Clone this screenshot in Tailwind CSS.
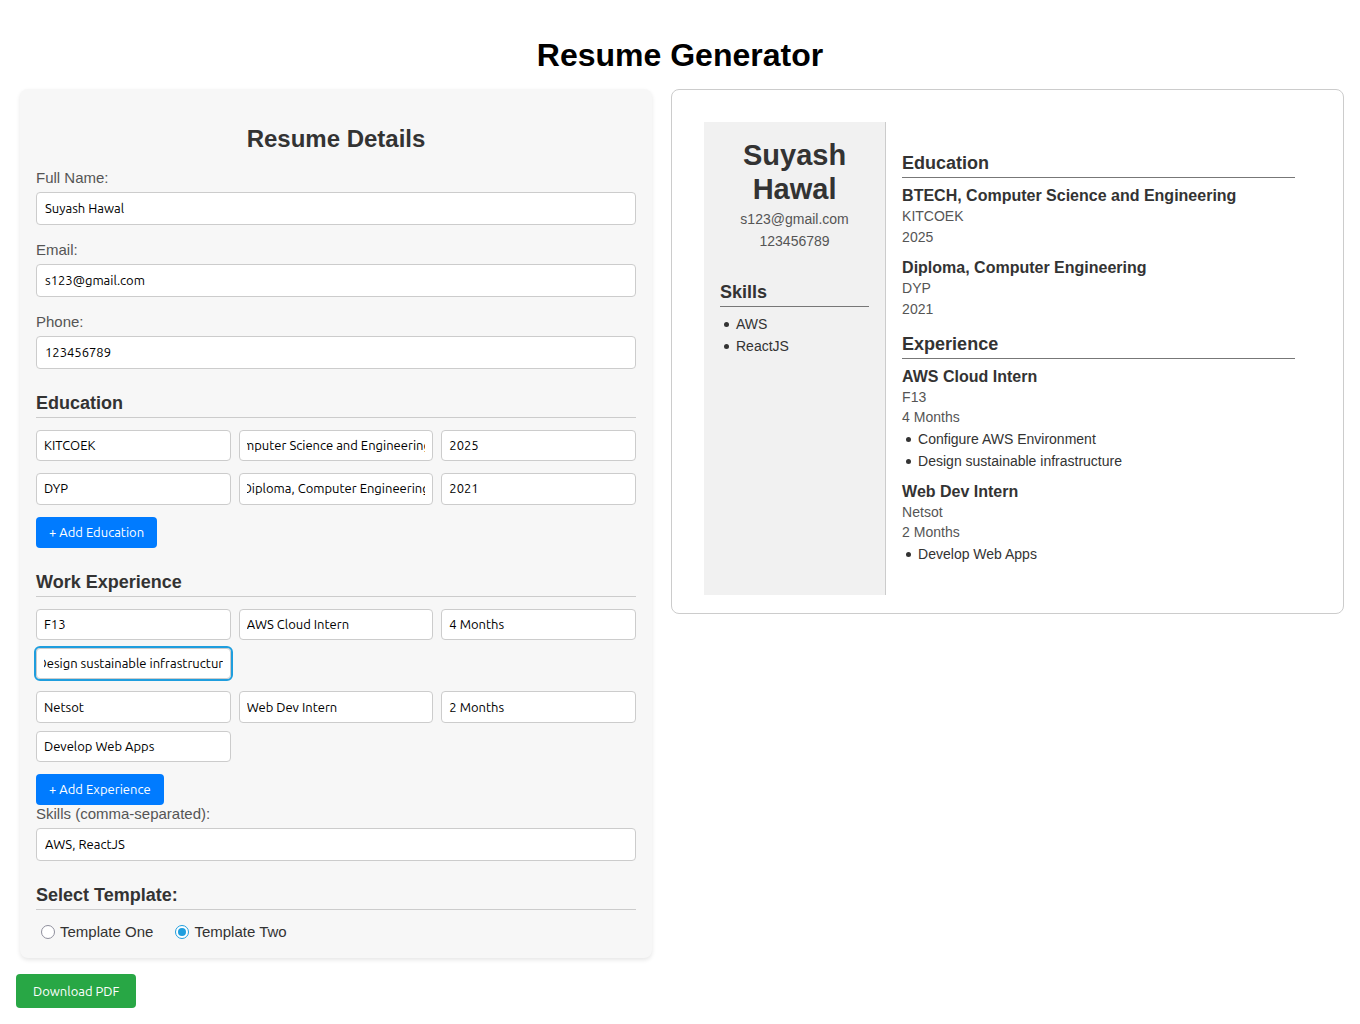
<!DOCTYPE html>
<html lang="en">
<head>
<meta charset="utf-8">
<meta name="viewport" content="width=device-width, initial-scale=1">
<title>Resume Generator</title>
<script src="https://cdn.jsdelivr.net/npm/@tailwindcss/browser@4"></script>
</head>
<body class="bg-white px-4 pt-9 pb-4 font-['Liberation_Sans',Arial,sans-serif] text-[#333]">
<h1 class="mb-[15px] text-center text-[32px] leading-[38px] font-bold text-black">Resume Generator</h1>

<div class="grid grid-cols-[632fr_673fr] items-start gap-[19px] pl-1">
  <form class="rounded-lg bg-[#f7f7f7] px-4 pt-9 pb-4 shadow-[0_2px_4px_rgba(0,0,0,0.1)]">
    <h2 class="mb-3 text-center text-2xl leading-7 font-bold">Resume Details</h2>

    <label for="name" class="block pt-[3px] pb-1 text-[15px] leading-5 text-[#555]">Full Name:</label>
    <input id="name" type="text" value="Suyash Hawal" class="mb-3 block h-[33px] w-full rounded border border-[#ccc] bg-white px-2 pb-0.5 font-[Ubuntu,'Noto_Sans',sans-serif] text-[13px] text-black">
    <label for="email" class="block pt-[3px] pb-1 text-[15px] leading-5 text-[#555]">Email:</label>
    <input id="email" type="email" value="s123@gmail.com" class="mb-3 block h-[33px] w-full rounded border border-[#ccc] bg-white px-2 pb-0.5 font-[Ubuntu,'Noto_Sans',sans-serif] text-[13px] text-black">
    <label for="phone" class="block pt-[3px] pb-1 text-[15px] leading-5 text-[#555]">Phone:</label>
    <input id="phone" type="tel" value="123456789" class="block h-[33px] w-full rounded border border-[#ccc] bg-white px-2 pb-0.5 font-[Ubuntu,'Noto_Sans',sans-serif] text-[13px] text-black">

    <h3 class="mt-[22px] mb-3 border-b border-[#ccc] pb-0.5 text-lg leading-6 font-bold">Education</h3>
    <div class="mb-3 grid grid-cols-3 gap-2">
      <input aria-label="School" type="text" value="KITCOEK" class="h-[31px] w-full min-w-0 rounded border border-[#ccc] bg-white px-[7px] pb-0.5 font-[Ubuntu,'Noto_Sans',sans-serif] text-[13px] text-black">
      <input aria-label="Degree" type="text" data-from-end="5" value="BTECH, Computer Science and Engineering" class="h-[31px] w-full min-w-0 rounded border border-[#ccc] bg-white px-[7px] pb-0.5 font-[Ubuntu,'Noto_Sans',sans-serif] text-[13px] text-black">
      <input aria-label="Year" type="text" value="2025" class="h-[31px] w-full min-w-0 rounded border border-[#ccc] bg-white px-[7px] pb-0.5 font-[Ubuntu,'Noto_Sans',sans-serif] text-[13px] text-black">
    </div>
    <div class="mb-3 grid grid-cols-3 gap-2">
      <input aria-label="School" type="text" value="DYP" class="h-8 w-full min-w-0 rounded border border-[#ccc] bg-white px-[7px] pb-0.5 font-[Ubuntu,'Noto_Sans',sans-serif] text-[13px] text-black">
      <input aria-label="Degree" type="text" data-from-end="4" value="Diploma, Computer Engineering" class="h-8 w-full min-w-0 rounded border border-[#ccc] bg-white px-[7px] pb-0.5 font-[Ubuntu,'Noto_Sans',sans-serif] text-[13px] text-black">
      <input aria-label="Year" type="text" value="2021" class="h-8 w-full min-w-0 rounded border border-[#ccc] bg-white px-[7px] pb-0.5 font-[Ubuntu,'Noto_Sans',sans-serif] text-[13px] text-black">
    </div>
    <button type="button" class="block h-[31px] rounded bg-[#007bff] px-[13px] font-[Ubuntu,'Noto_Sans',sans-serif] text-[13px] text-white">+ Add Education</button>

    <h3 class="mt-[22px] mb-3 border-b border-[#ccc] pb-0.5 text-lg leading-6 font-bold">Work Experience</h3>
    <div class="mb-3 grid grid-cols-3 gap-2">
      <input aria-label="Company" type="text" value="F13" class="h-[31px] w-full min-w-0 rounded border border-[#ccc] bg-white px-[7px] pb-0.5 font-[Ubuntu,'Noto_Sans',sans-serif] text-[13px] text-black">
      <input aria-label="Role" type="text" value="AWS Cloud Intern" class="h-[31px] w-full min-w-0 rounded border border-[#ccc] bg-white px-[7px] pb-0.5 font-[Ubuntu,'Noto_Sans',sans-serif] text-[13px] text-black">
      <input aria-label="Duration" type="text" value="4 Months" class="h-[31px] w-full min-w-0 rounded border border-[#ccc] bg-white px-[7px] pb-0.5 font-[Ubuntu,'Noto_Sans',sans-serif] text-[13px] text-black">
      <input aria-label="Responsibilities" type="text" data-from-end="7" value="Configure AWS Environment,Design sustainable infrastructure" class="h-[31px] w-full min-w-0 rounded border border-[#ccc] bg-white px-[7px] pb-0.5 font-[Ubuntu,'Noto_Sans',sans-serif] text-[13px] text-black outline-2 outline-[#1f9ede]">
    </div>
    <div class="mb-3 grid grid-cols-3 gap-2">
      <input aria-label="Company" type="text" value="Netsot" class="h-8 w-full min-w-0 rounded border border-[#ccc] bg-white px-[7px] font-[Ubuntu,'Noto_Sans',sans-serif] text-[13px] text-black">
      <input aria-label="Role" type="text" value="Web Dev Intern" class="h-8 w-full min-w-0 rounded border border-[#ccc] bg-white px-[7px] font-[Ubuntu,'Noto_Sans',sans-serif] text-[13px] text-black">
      <input aria-label="Duration" type="text" value="2 Months" class="h-8 w-full min-w-0 rounded border border-[#ccc] bg-white px-[7px] font-[Ubuntu,'Noto_Sans',sans-serif] text-[13px] text-black">
      <input aria-label="Responsibilities" type="text" value="Develop Web Apps" class="h-[31px] w-full min-w-0 rounded border border-[#ccc] bg-white px-[7px] pb-0.5 font-[Ubuntu,'Noto_Sans',sans-serif] text-[13px] text-black">
    </div>
    <button type="button" class="block h-[31px] rounded bg-[#007bff] px-[13px] font-[Ubuntu,'Noto_Sans',sans-serif] text-[13px] text-white">+ Add Experience</button>

    <label for="skills" class="block pb-[5px] text-[15px] leading-[18px] text-[#555]">Skills (comma-separated):</label>
    <input id="skills" type="text" value="AWS, ReactJS" class="block h-[33px] w-full rounded border border-[#ccc] bg-white px-2 pb-0.5 font-[Ubuntu,'Noto_Sans',sans-serif] text-[13px] text-black">

    <h3 class="mt-[22px] mb-3 border-b border-[#ccc] pb-0.5 text-lg leading-6 font-bold">Select Template:</h3>
    <div class="flex gap-[22px] pl-[5px] text-[15px] leading-5">
      <label class="flex items-center gap-[5px]"><input type="radio" name="template" class="grid size-3.5 appearance-none place-items-center rounded-full border border-[#8f8f9d] bg-white checked:border-[#1f9ede] checked:before:size-2 checked:before:rounded-full checked:before:bg-[#1f9ede]">Template One</label>
      <label class="flex items-center gap-[5px]"><input type="radio" name="template" checked class="grid size-3.5 appearance-none place-items-center rounded-full border border-[#8f8f9d] bg-white checked:border-[#1f9ede] checked:before:size-2 checked:before:rounded-full checked:before:bg-[#1f9ede]">Template Two</label>
    </div>
  </form>

  <section class="rounded-lg border border-[#ccc] px-8 pt-8 pb-[18px]">
    <div class="grid grid-cols-[30%_70%] text-[14px]">
      <aside class="border-r border-[#ccc] bg-[#f1f1f1] p-4">
        <h1 class="mb-0.5 text-center text-[29px] leading-[34px] font-bold">Suyash Hawal</h1>
        <p class="text-center leading-[22px] text-[#555]">s123@gmail.com</p>
        <p class="text-center leading-[22px] text-[#555]">123456789</p>
        <h2 class="mt-7 mb-1.5 border-b border-[#777] pb-0.5 text-lg leading-6 font-bold">Skills</h2>
        <ul class="pl-1 leading-[22px]">
          <li class="flex items-center gap-[7px] before:size-[5px] before:rounded-full before:bg-[#333]">AWS</li>
          <li class="flex items-center gap-[7px] before:size-[5px] before:rounded-full before:bg-[#333]">ReactJS</li>
        </ul>
      </aside>
      <div class="px-4 pt-[29px] pb-[30px]">
        <h2 class="mb-[7px] border-b border-[#777] pb-0.5 text-lg leading-6 font-bold">Education</h2>
        <div class="mb-[9px] leading-[21px] text-[#555]">
          <h3 class="text-base leading-[21px] font-bold text-[#333]">BTECH, Computer Science and Engineering</h3>
          <p>KITCOEK</p>
          <p>2025</p>
        </div>
        <div class="mb-3 leading-[21px] text-[#555]">
          <h3 class="text-base leading-[21px] font-bold text-[#333]">Diploma, Computer Engineering</h3>
          <p>DYP</p>
          <p>2021</p>
        </div>
        <h2 class="mb-[7px] border-b border-[#777] pb-0.5 text-lg leading-6 font-bold">Experience</h2>
        <div class="mb-[9px] leading-5 text-[#555]">
          <h3 class="text-base leading-[21px] font-bold text-[#333]">AWS Cloud Intern</h3>
          <p>F13</p>
          <p>4 Months</p>
          <ul class="mt-px pl-1 leading-[22px] text-[#333]">
            <li class="flex items-center gap-[7px] before:size-[5px] before:rounded-full before:bg-[#333]">Configure AWS Environment</li>
            <li class="flex items-center gap-[7px] before:size-[5px] before:rounded-full before:bg-[#333]">Design sustainable infrastructure</li>
          </ul>
        </div>
        <div class="leading-5 text-[#555]">
          <h3 class="text-base leading-[21px] font-bold text-[#333]">Web Dev Intern</h3>
          <p>Netsot</p>
          <p>2 Months</p>
          <ul class="mt-px pl-1 leading-[22px] text-[#333]">
            <li class="flex items-center gap-[7px] before:size-[5px] before:rounded-full before:bg-[#333]">Develop Web Apps</li>
          </ul>
        </div>
      </div>
    </div>
  </section>
</div>

<button type="button" class="mt-4 block h-[34px] rounded bg-[#28a745] px-[17px] pt-0.5 font-[Ubuntu,'Noto_Sans',sans-serif] text-[13px] text-white">Download PDF</button>

<script>
  function scrollLongValues() {
    document.querySelectorAll('[data-from-end]').forEach(function (el) {
      el.scrollLeft = 9999;
      el.scrollLeft = el.scrollLeft - Number(el.dataset.fromEnd);
    });
  }
  scrollLongValues();
  window.addEventListener('load', function () {
    requestAnimationFrame(scrollLongValues);
  });
</script>
</body>
</html>
